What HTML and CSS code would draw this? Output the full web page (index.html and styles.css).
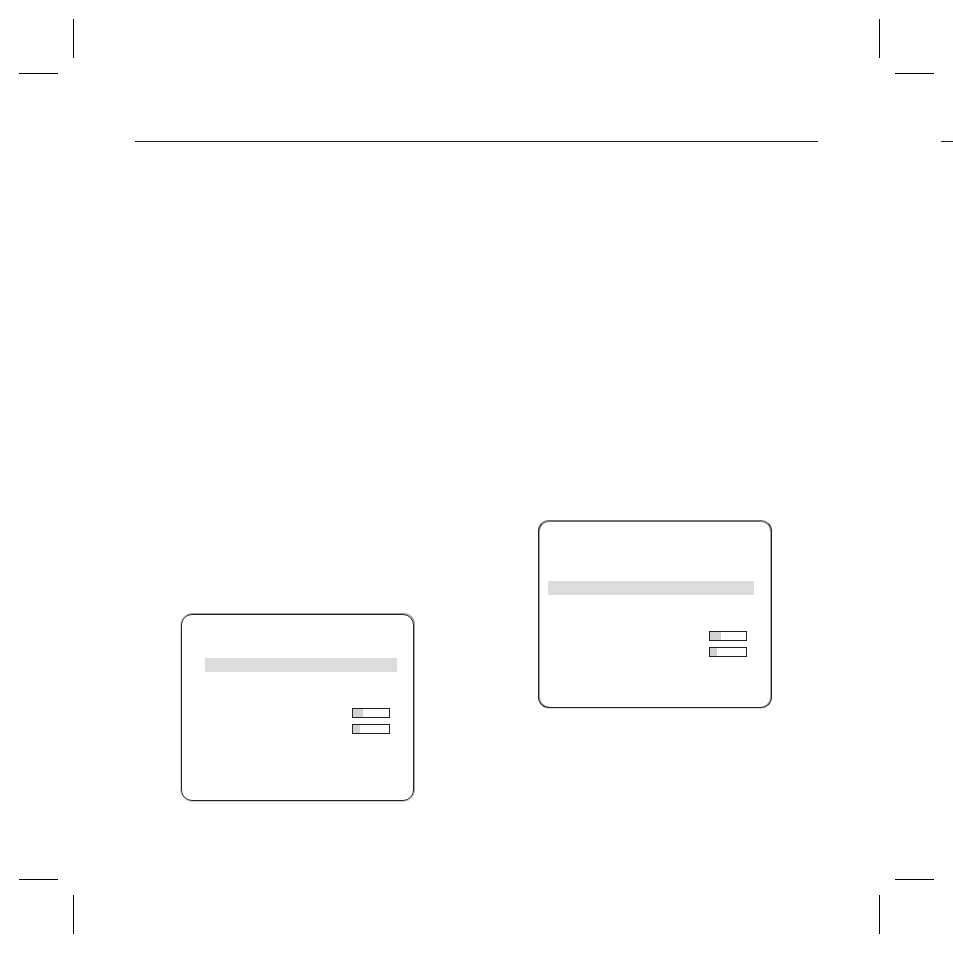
FILE: index.html
```html
<!DOCTYPE html>
<html lang="en">
<head>
    <meta charset="UTF-8">
    <meta name="viewport" content="width=device-width, initial-scale=1.0">
    <title>Setup Menu</title>
    <link rel="stylesheet" href="styles.css">
</head>
<body>
    <div class="sheet">
        <div class="crop-row">
            <svg class="crop" viewBox="0 0 55 55" aria-hidden="true"><path d="M54 0h1v39h-1zM0 54h39v1H0z"/></svg>
            <svg class="crop" viewBox="0 0 55 55" aria-hidden="true"><path d="M0 0h1v39H0zM16 54h39v1H16z"/></svg>
        </div>

        <header class="rules">
            <hr class="rule">
            <hr class="rule rule-next">
        </header>

        <main class="columns">
            <section class="panel panel-left">
                <div class="selected-row"></div>
                <div class="levels">
                    <div class="level" role="meter" aria-label="Level 1" aria-valuemin="0" aria-valuemax="36" aria-valuenow="10">
                        <div class="level-fill" style="width: 10px"></div>
                    </div>
                    <div class="level" role="meter" aria-label="Level 2" aria-valuemin="0" aria-valuemax="36" aria-valuenow="7">
                        <div class="level-fill" style="width: 7px"></div>
                    </div>
                </div>
            </section>

            <section class="panel panel-right">
                <div class="selected-row"></div>
                <div class="levels">
                    <div class="level" role="meter" aria-label="Level 1" aria-valuemin="0" aria-valuemax="36" aria-valuenow="11">
                        <div class="level-fill" style="width: 11px"></div>
                    </div>
                    <div class="level" role="meter" aria-label="Level 2" aria-valuemin="0" aria-valuemax="36" aria-valuenow="7">
                        <div class="level-fill" style="width: 7px"></div>
                    </div>
                </div>
            </section>
        </main>

        <div class="crop-row">
            <svg class="crop" viewBox="0 0 55 55" aria-hidden="true"><path d="M0 0h39v1H0zM54 16h1v39h-1z"/></svg>
            <svg class="crop" viewBox="0 0 55 55" aria-hidden="true"><path d="M16 0h39v1H16zM0 16h1v39H0z"/></svg>
        </div>
    </div>
</body>
</html>
```

FILE: styles.css
```css
* {
    box-sizing: border-box;
}

body {
    margin: 0;
    background-color: #fff;
    font-family: "Liberation Sans", Arial, sans-serif;
}

.sheet {
    display: flex;
    flex-direction: column;
    min-height: 100vh;
    padding: 19px 0;
}

/* Crop marks in the corners */
.crop-row {
    display: flex;
    justify-content: space-between;
    padding: 0 19px;
}

.crop {
    display: block;
    width: 55px;
    height: 55px;
    fill: #000;
    shape-rendering: crispEdges;
}

/* Header line, and the start of the line on the next page */
.rules {
    display: flex;
    gap: 123px;
    padding: 67px 0 0 135px;
}

.rule {
    flex: 1;
    height: 1px;
    margin: 0;
    border: none;
    background-color: #231f20;
}

.rule-next {
    flex: none;
    width: 12px;
}

/* Two text columns */
.columns {
    flex: 1;
    display: grid;
    grid-template-columns: 1fr 1fr;
    gap: 31px;
    align-items: end;
    padding: 0 135px 78px;
}

/* Menu screens */
.panel {
    border: 1px solid #231f20;
    border-radius: 11px;
}

.panel-left {
    margin: 0 47px 0 46px;
    padding: 43px 16px 66px 23px;
    box-shadow: 1px -1px 0 #a3a1a2, 0 0 0 1px #d4d3d3;
}

.panel-right {
    margin: 0 46px 93px;
    padding: 60px 17px 50px 9px;
    border-top-color: #6d6b6c;
    box-shadow: inset 0 1px 0 #6d6b6c, inset 1px 0 0 #a3a1a2, inset -1px 0 0 #a3a1a2, 0 1px 0 #dddcdc;
}

.selected-row {
    height: 14px;
    background-color: #dcdcdc;
}

.levels {
    display: flex;
    flex-direction: column;
    align-items: flex-end;
    gap: 6px;
    margin-top: 36px;
    padding-right: 7px;
}

.level {
    width: 38px;
    height: 10px;
    border: 1px solid #231f20;
}

.level-fill {
    height: 100%;
    background-color: #d1d3d2;
}
```
